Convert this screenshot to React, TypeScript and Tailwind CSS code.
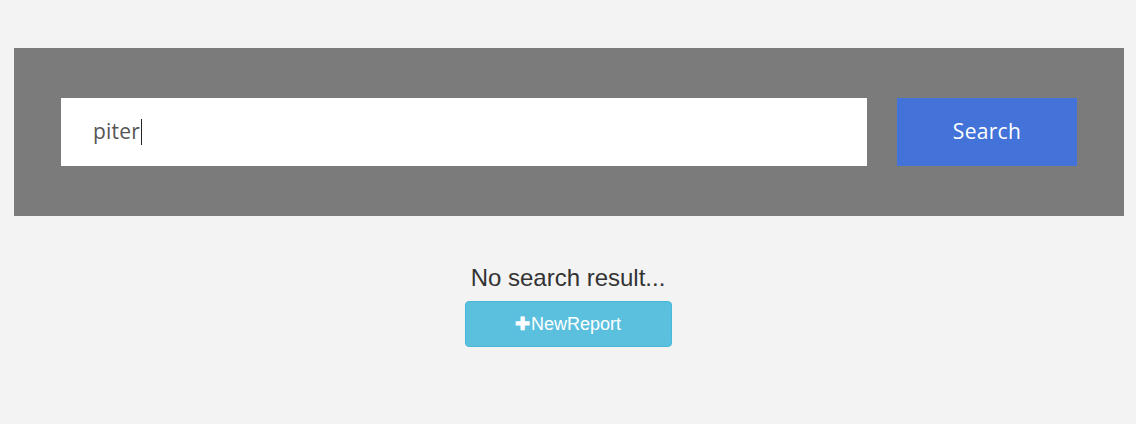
import React from "react";

export default function App() {
  return (
    <div className="min-h-[424px] w-full bg-[#f3f3f3] pt-[48px]">
      <div className="ml-[14px] mr-[12px] flex h-[168px] items-center gap-[30px] bg-[#7b7b7b] pl-[47px] pr-[47px]">
        <div className="flex h-[68px] flex-1 items-center bg-white pl-[32px]">
          <span className="text-[21px] tracking-[0.2px] text-[#555555]" style={{ fontFamily: '"Open Sans", sans-serif' }}>piter</span>
          <span className="ml-[1px] h-[26px] w-[1px] bg-[#222]" />
        </div>
        <button className="flex h-[68px] w-[180px] items-center justify-center bg-[#4373d9] text-[21px] tracking-[0.3px] text-white" style={{ fontFamily: '"Open Sans", sans-serif' }}>
          Search
        </button>
      </div>
      <div className="mt-[46px] flex flex-col items-center" style={{ fontFamily: '"Liberation Sans", Arial, sans-serif' }}>
        <div className="text-[24px] leading-[32px] text-[#333333]">No search result...</div>
        <button className="mt-[7px] flex h-[46px] w-[207px] items-center justify-center rounded-[4px] border border-[#46b8da] bg-[#5bc0de] text-[18px] text-white">
          <span className="mr-[1px] font-bold">✚</span>NewReport
        </button>
      </div>
    </div>
  );
}
